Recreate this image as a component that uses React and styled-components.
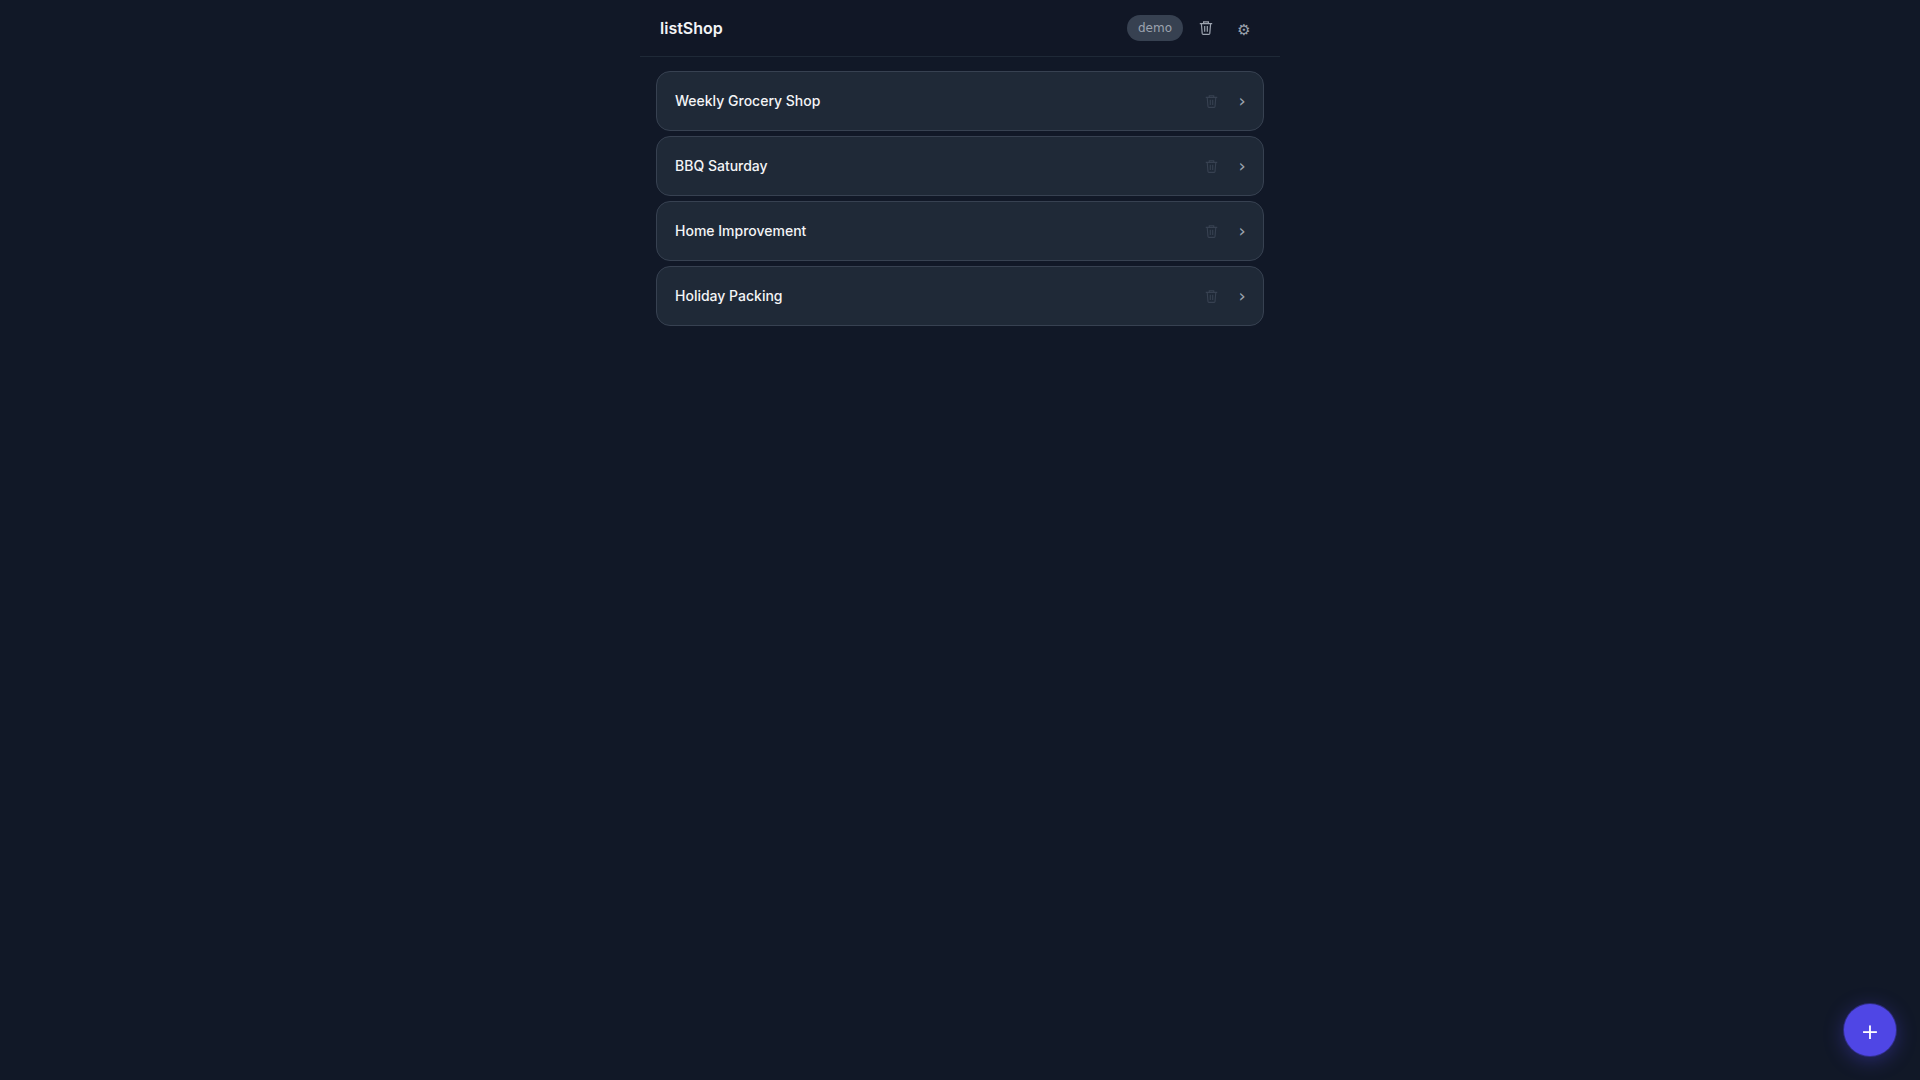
import React from "react";
import styled, { createGlobalStyle } from "styled-components";

const GlobalStyle = createGlobalStyle`
  *, *::before, *::after { box-sizing: border-box; }
  body {
    margin: 0;
    background: #111827;
    color: #f3f4f6;
    font-family: "Inter", "Liberation Sans", sans-serif;
  }
  button { font: inherit; color: inherit; background: none; border: 0; padding: 0; cursor: pointer; }
`;

const Page = styled.div`
  max-width: 640px;
  min-height: 100vh;
  margin: 0 auto;
`;

const Header = styled.header`
  display: flex;
  align-items: center;
  justify-content: space-between;
  height: 57px;
  padding: 0 21px 0 20px;
  background: #111726;
  border-bottom: 1px solid #1f2937;
`;

const Title = styled.h1`
  margin: 0;
  font-size: 16px;
  line-height: 24px;
  font-weight: 600;
`;

const Actions = styled.div`
  display: flex;
  align-items: center;
  gap: 8px;
`;

const Badge = styled.span`
  padding: 4px 11px;
  border-radius: 13px;
  background: #374151;
  color: #9ca3af;
  font-family: "DejaVu Sans", sans-serif;
  font-size: 12px;
  line-height: 18px;
`;

const IconButton = styled.button`
  display: grid;
  place-items: center;
  width: 30px;
  height: 32px;
  color: #9ca3af;
  font-family: "DejaVu Sans", sans-serif;
  font-size: 15px;
`;

const SettingsButton = styled(IconButton)`
  padding-top: 3px;
`;

const List = styled.ul`
  display: flex;
  flex-direction: column;
  gap: 5px;
  margin: 0;
  padding: 14px 16px;
  list-style: none;
`;

const Card = styled.li`
  display: flex;
  align-items: center;
  height: 60px;
  padding: 0 13px 0 18px;
  border: 1px solid #374151;
  border-radius: 14px;
  background: #1f2937;
`;

const Name = styled.button`
  flex: 1;
  text-align: left;
  font-size: 14px;
  line-height: 20px;
  font-weight: 500;
`;

const DeleteButton = styled(IconButton)`
  color: #374151;
`;

const Chevron = styled.span`
  width: 16px;
  margin-left: 8px;
  color: #9ca3af;
  text-align: center;
  font-family: "DejaVu Sans", sans-serif;
  font-size: 18px;
  line-height: 20px;
`;

const AddButton = styled.button`
  position: fixed;
  right: 24px;
  bottom: 24px;
  width: 52px;
  height: 52px;
  padding-top: 3px;
  border-radius: 50%;
  background: #4f46e5;
  color: #fff;
  font-family: "DejaVu Sans", sans-serif;
  font-size: 22px;
  box-shadow: 0 0 0 1px rgba(79, 70, 229, 0.4), 0 4px 20px rgba(79, 70, 229, 0.4);
`;

const lists = ["Weekly Grocery Shop", "BBQ Saturday", "Home Improvement", "Holiday Packing"];

function TrashIcon({ size }) {
  return (
    <svg width={size} height={size} viewBox="0 0 14 14" fill="none" stroke="currentColor" aria-hidden="true">
      <path d="M.8 2.6h12.4M4.6 2.5V.8h4.8v1.7M2.4 2.8l.8 9.6q.1.9 1 .9h5.6q.9 0 1-.9l.8-9.6M5.7 5v5.8M8.3 5v5.8" strokeWidth="1.2" />
    </svg>
  );
}

export default function App() {
  return (
    <>
      <GlobalStyle />
      <Page>
        <Header>
          <Title>listShop</Title>
          <Actions>
            <Badge>demo</Badge>
            <IconButton aria-label="Deleted lists"><TrashIcon size={14} /></IconButton>
            <SettingsButton aria-label="Settings">⚙</SettingsButton>
          </Actions>
        </Header>
        <main>
          <List>
            {lists.map((name) => (
              <Card key={name}>
                <Name>{name}</Name>
                <DeleteButton aria-label={`Delete ${name}`}><TrashIcon size={13} /></DeleteButton>
                <Chevron aria-hidden="true">›</Chevron>
              </Card>
            ))}
          </List>
        </main>
      </Page>
      <AddButton aria-label="Add list">+</AddButton>
    </>
  );
}
